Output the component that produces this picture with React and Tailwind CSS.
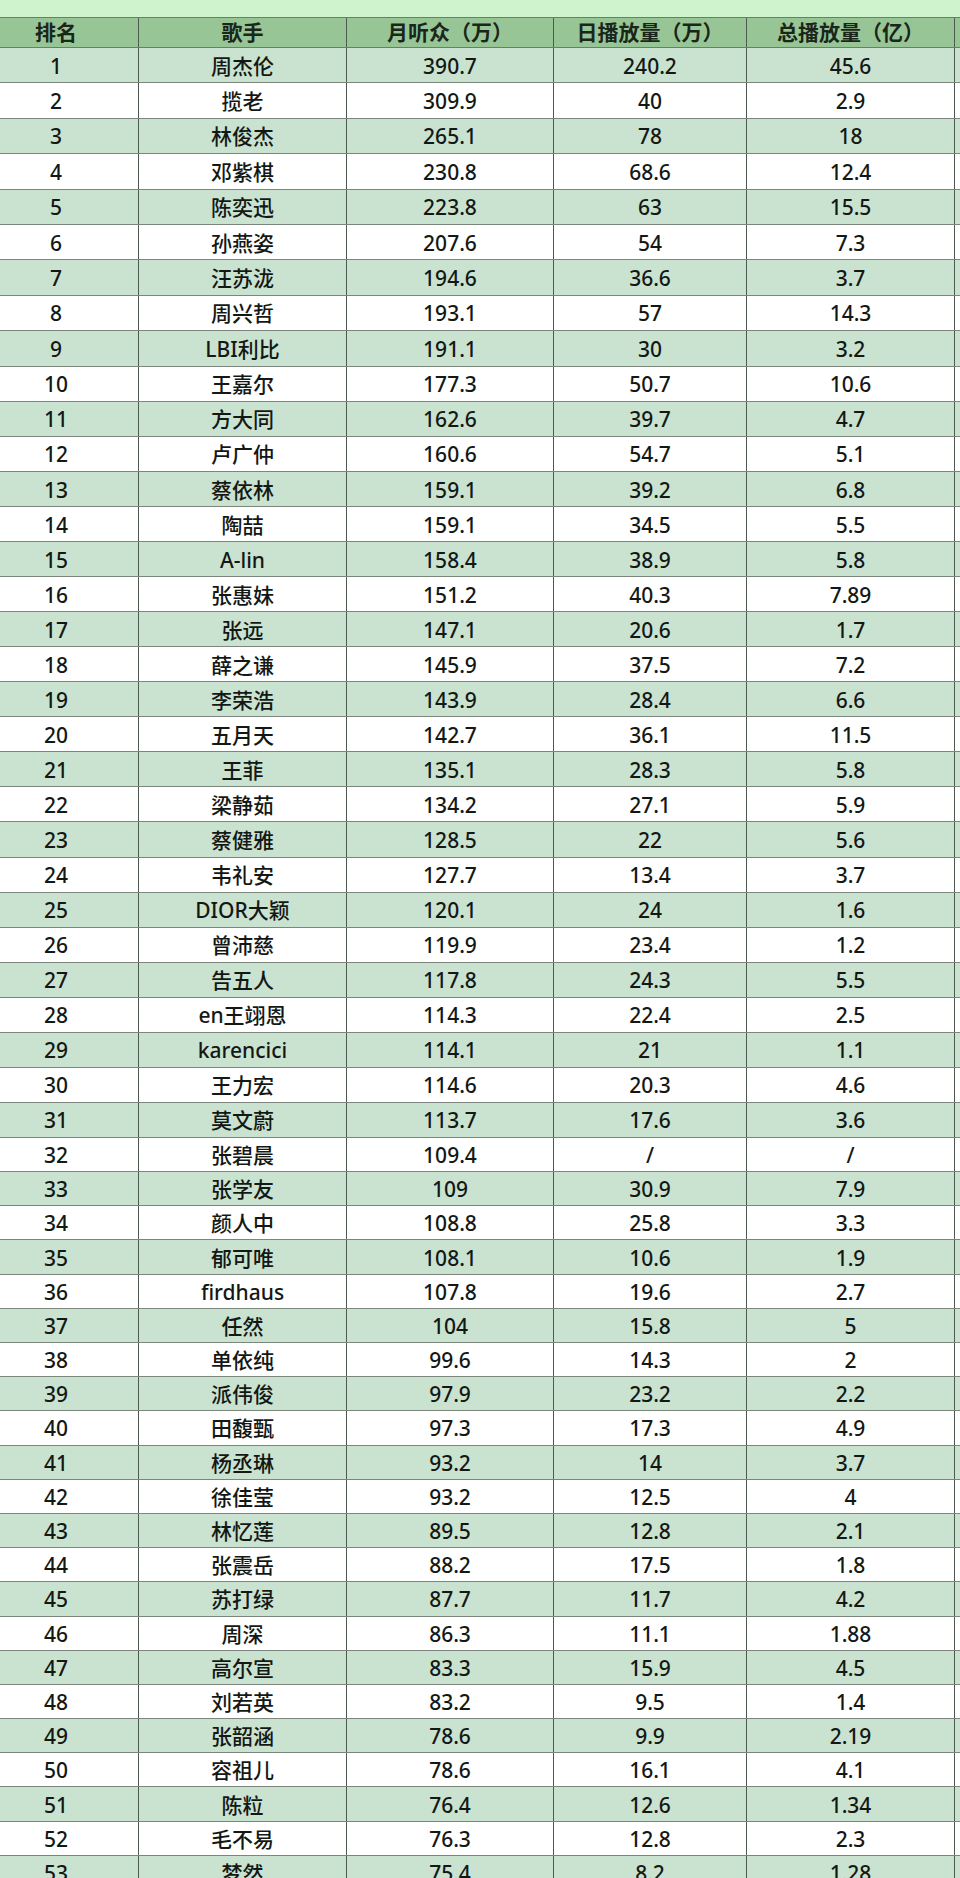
import React from "react";

const rows = [
  [1, "周杰伦", "390.7", "240.2", "45.6"],
  [2, "揽老", "309.9", "40", "2.9"],
  [3, "林俊杰", "265.1", "78", "18"],
  [4, "邓紫棋", "230.8", "68.6", "12.4"],
  [5, "陈奕迅", "223.8", "63", "15.5"],
  [6, "孙燕姿", "207.6", "54", "7.3"],
  [7, "汪苏泷", "194.6", "36.6", "3.7"],
  [8, "周兴哲", "193.1", "57", "14.3"],
  [9, "LBI利比", "191.1", "30", "3.2"],
  [10, "王嘉尔", "177.3", "50.7", "10.6"],
  [11, "方大同", "162.6", "39.7", "4.7"],
  [12, "卢广仲", "160.6", "54.7", "5.1"],
  [13, "蔡依林", "159.1", "39.2", "6.8"],
  [14, "陶喆", "159.1", "34.5", "5.5"],
  [15, "A-lin", "158.4", "38.9", "5.8"],
  [16, "张惠妹", "151.2", "40.3", "7.89"],
  [17, "张远", "147.1", "20.6", "1.7"],
  [18, "薛之谦", "145.9", "37.5", "7.2"],
  [19, "李荣浩", "143.9", "28.4", "6.6"],
  [20, "五月天", "142.7", "36.1", "11.5"],
  [21, "王菲", "135.1", "28.3", "5.8"],
  [22, "梁静茹", "134.2", "27.1", "5.9"],
  [23, "蔡健雅", "128.5", "22", "5.6"],
  [24, "韦礼安", "127.7", "13.4", "3.7"],
  [25, "DIOR大颖", "120.1", "24", "1.6"],
  [26, "曾沛慈", "119.9", "23.4", "1.2"],
  [27, "告五人", "117.8", "24.3", "5.5"],
  [28, "en王翊恩", "114.3", "22.4", "2.5"],
  [29, "karencici", "114.1", "21", "1.1"],
  [30, "王力宏", "114.6", "20.3", "4.6"],
  [31, "莫文蔚", "113.7", "17.6", "3.6"],
  [32, "张碧晨", "109.4", "/", "/"],
  [33, "张学友", "109", "30.9", "7.9"],
  [34, "颜人中", "108.8", "25.8", "3.3"],
  [35, "郁可唯", "108.1", "10.6", "1.9"],
  [36, "firdhaus", "107.8", "19.6", "2.7"],
  [37, "任然", "104", "15.8", "5"],
  [38, "单依纯", "99.6", "14.3", "2"],
  [39, "派伟俊", "97.9", "23.2", "2.2"],
  [40, "田馥甄", "97.3", "17.3", "4.9"],
  [41, "杨丞琳", "93.2", "14", "3.7"],
  [42, "徐佳莹", "93.2", "12.5", "4"],
  [43, "林忆莲", "89.5", "12.8", "2.1"],
  [44, "张震岳", "88.2", "17.5", "1.8"],
  [45, "苏打绿", "87.7", "11.7", "4.2"],
  [46, "周深", "86.3", "11.1", "1.88"],
  [47, "高尔宣", "83.3", "15.9", "4.5"],
  [48, "刘若英", "83.2", "9.5", "1.4"],
  [49, "张韶涵", "78.6", "9.9", "2.19"],
  [50, "容祖儿", "78.6", "16.1", "4.1"],
  [51, "陈粒", "76.4", "12.6", "1.34"],
  [52, "毛不易", "76.3", "12.8", "2.3"],
  [53, "梦然", "75.4", "8.2", "1.28"],
];

const cols = "grid grid-cols-[139px_208px_207px_193px_208px_5px]";
const cell = "flex items-center justify-center border-r-[1.5px] border-[#4f5a4f]";

// the photo is slightly skewed: rows get a bit shorter towards the bottom
function rowHeight(rank) {
  if (rank <= 10) return "h-[35.4px]";
  if (rank <= 31) return "h-[35.05px]";
  return "h-[34.2px]";
}

function App() {
  return (
    <div className="w-[960px] h-[1878px] overflow-hidden bg-[#cff3cd] font-['Noto_Sans','Noto_Sans_CJK_SC',sans-serif] text-[#141814]">
      <div className="h-[17px]" />

      {/* header */}
      <div className={`${cols} h-[31px] bg-[#97c595] border-y border-[#6a7f68] text-[21px] font-bold leading-none text-[#1a261a]`}>
        <div className={`${cell} pr-[26px]`}>排名</div>
        <div className={cell}>歌手</div>
        <div className={cell}>月听众（万）</div>
        <div className={cell}>日播放量（万）</div>
        <div className={cell}>总播放量（亿）</div>
        <div />
      </div>

      {rows.map(([rank, name, monthly, daily, total]) => (
        <div
          key={rank}
          className={`${cols} ${rowHeight(rank)} border-b border-[#7d867d] text-[21px] font-medium leading-none ${
            rank % 2 === 1 ? "bg-[#cae3d1]" : "bg-white"
          }`}
        >
          <div className={`${cell} pr-[26px] pt-[2px]`}>{rank}</div>
          <div className={`${cell} pt-[2px]`}>{name}</div>
          <div className={`${cell} pt-[2px]`}>{monthly}</div>
          <div className={`${cell} pt-[2px]`}>{daily}</div>
          <div className={`${cell} pt-[2px]`}>{total}</div>
          <div />
        </div>
      ))}
    </div>
  );
}

export default App;
